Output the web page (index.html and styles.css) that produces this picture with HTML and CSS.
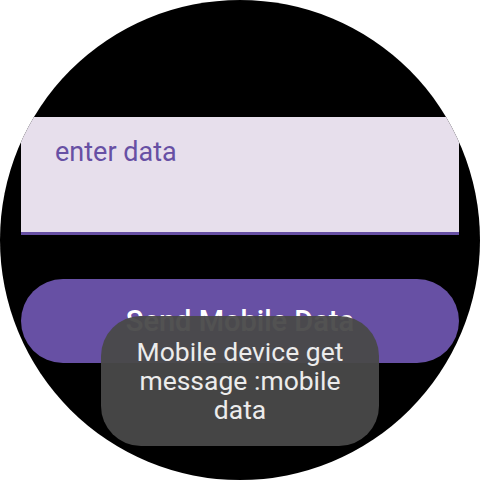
FILE: index.html
```html
<!DOCTYPE html>
<html lang="en">
<head>
  <meta charset="UTF-8" />
  <meta name="viewport" content="width=device-width, initial-scale=1.0"/>
  <title>Watch Sender</title>
  <link rel="stylesheet" href="styles.css">
</head>
<body>

  <div class="watch">
    <div class="screen">
      <div class="field">
        <span class="placeholder">enter data</span>
      </div>
      <button class="send-btn">Send Mobile Data</button>
    </div>

    <div class="toast">Mobile device get message :mobile data</div>
  </div>

</body>
</html>
```

FILE: styles.css
```css
:root {
  --primary: #6750a4;
  --field-bg: #e7dfec;
  --toast-bg: rgba(73, 73, 73, 0.95);
}

* {
  margin: 0;
  padding: 0;
  box-sizing: border-box;
  font-family: 'Roboto', 'Liberation Sans', sans-serif;
}

body {
  width: 480px;
  height: 480px;
  background: #fff;
  overflow: hidden;
}

.watch {
  width: 480px;
  height: 480px;
  border-radius: 50%;
  background: #000;
  position: relative;
  overflow: hidden;
}

.screen {
  display: flex;
  flex-direction: column;
  gap: 44px;
  padding: 117px 21px 0;
}

.field {
  height: 118px;
  background: var(--field-bg);
  border-bottom: 3px solid var(--primary);
  padding: 19px 34px 0;
}

.placeholder {
  display: block;
  font-size: 27px;
  line-height: 32px;
  color: var(--primary);
}

.send-btn {
  height: 84px;
  border: none;
  border-radius: 42px;
  background: var(--primary);
  color: #fff;
  font-size: 29px;
  font-weight: 500;
}

.toast {
  position: absolute;
  left: 101px;
  top: 316px;
  width: 278px;
  height: 130px;
  padding: 21px 16px;
  border-radius: 40px;
  background: var(--toast-bg);
  color: #ececec;
  font-size: 26.5px;
  line-height: 29px;
  text-align: center;
}
```
